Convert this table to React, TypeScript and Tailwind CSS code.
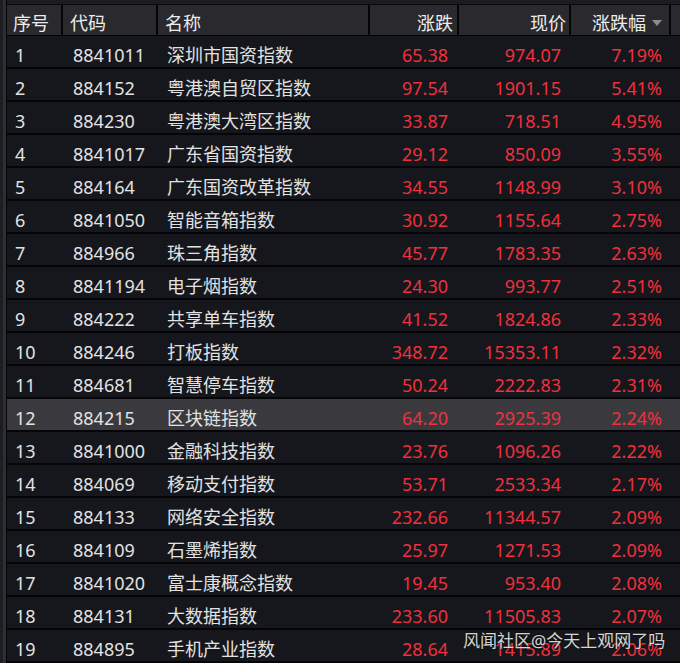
import React from 'react';

// 板块涨幅排行（深色行情表）
const rows: [string, string, string, string, string, string][] = [
  ['1', '8841011', '深圳市国资指数', '65.38', '974.07', '7.19%'],
  ['2', '884152', '粤港澳自贸区指数', '97.54', '1901.15', '5.41%'],
  ['3', '884230', '粤港澳大湾区指数', '33.87', '718.51', '4.95%'],
  ['4', '8841017', '广东省国资指数', '29.12', '850.09', '3.55%'],
  ['5', '884164', '广东国资改革指数', '34.55', '1148.99', '3.10%'],
  ['6', '8841050', '智能音箱指数', '30.92', '1155.64', '2.75%'],
  ['7', '884966', '珠三角指数', '45.77', '1783.35', '2.63%'],
  ['8', '8841194', '电子烟指数', '24.30', '993.77', '2.51%'],
  ['9', '884222', '共享单车指数', '41.52', '1824.86', '2.33%'],
  ['10', '884246', '打板指数', '348.72', '15353.11', '2.32%'],
  ['11', '884681', '智慧停车指数', '50.24', '2222.83', '2.31%'],
  ['12', '884215', '区块链指数', '64.20', '2925.39', '2.24%'],
  ['13', '8841000', '金融科技指数', '23.76', '1096.26', '2.22%'],
  ['14', '884069', '移动支付指数', '53.71', '2533.34', '2.17%'],
  ['15', '884133', '网络安全指数', '232.66', '11344.57', '2.09%'],
  ['16', '884109', '石墨烯指数', '25.97', '1271.53', '2.09%'],
  ['17', '8841020', '富士康概念指数', '19.45', '953.40', '2.08%'],
  ['18', '884131', '大数据指数', '233.60', '11505.83', '2.07%'],
  ['19', '884895', '手机产业指数', '28.64', '1415.89', '2.06%'],
];

const grid = 'grid grid-cols-[56px_95px_212px_89px_112px_100px_1fr]';

export default function App() {
  return (
    <div
      className="relative w-[680px] h-[663px] overflow-hidden bg-[#14161b] flex text-[18px] leading-none"
      style={{ fontFamily: '"Noto Sans", "Noto Sans CJK SC", sans-serif' }}
    >
      {/* left strip */}
      <div className="w-[7px] shrink-0 flex">
        <div className="w-[3px] bg-[#1d1e22]" />
        <div className="w-[3px] bg-[#2e2f33]" />
        <div className="w-[1px] bg-[#050506]" />
      </div>

      <div className="flex-1 flex flex-col">
        <div className="h-[5px] bg-[#1c1d21] border-b border-[#0a0a0c]" />

        {/* header */}
        <div className={`${grid} h-[33px] bg-[#29292e] text-[#ececec] border-b border-[#000]`}>
          <div className="flex items-center pt-[6px] pl-[6px] border-r-2 border-[#050505]">序号</div>
          <div className="flex items-center pt-[6px] pl-[7px] border-r-2 border-[#050505]">代码</div>
          <div className="flex items-center pt-[6px] pl-[7px] border-r-2 border-[#050505]">名称</div>
          <div className="flex items-center pt-[6px] justify-end pr-[4px] border-r-2 border-[#050505]">涨跌</div>
          <div className="flex items-center pt-[6px] justify-end pr-[3px] border-r-2 border-[#050505]">现价</div>
          <div className="flex items-center pt-[6px] justify-end pr-[7px] gap-[6px] border-r-2 border-[#050505]">
            <span>涨跌幅</span>
            <svg width="10" height="6" viewBox="0 0 10 6">
              <path d="M0 0h10L5 6z" fill="#8c8c90" />
            </svg>
          </div>
          <div />
        </div>

        {/* rows */}
        {rows.map((r) => (
          <div
            key={r[0]}
            className={`${grid} h-[33px] shrink-0 border-b-2 border-[#050507] ${
              r[0] === '12' ? 'bg-[#3a3a3e]' : 'bg-[#15171c]'
            }`}
          >
            <div className="flex items-center pt-[6px] pl-[8px] text-[#e2e2e2]">{r[0]}</div>
            <div className="flex items-center pt-[6px] pl-[10px] text-[#e2e2e2]">{r[1]}</div>
            <div className="flex items-center pt-[6px] pl-[9px] text-[#e2e2e2]">{r[2]}</div>
            <div className="flex items-center pt-[6px] justify-end pr-[11px] text-[#f0303c]">{r[3]}</div>
            <div className="flex items-center pt-[6px] justify-end pr-[10px] text-[#f0303c]">{r[4]}</div>
            <div className="flex items-center pt-[6px] justify-end pr-[9px] text-[#f0303c]">{r[5]}</div>
            <div />
          </div>
        ))}
      </div>

      {/* watermark */}
      <div className="absolute left-[463px] top-[632px] text-[17px] text-[#e8e8e8] opacity-90 [text-shadow:0_0_2px_#000]">
        风闻社区@今天上观网了吗
      </div>
    </div>
  );
}
